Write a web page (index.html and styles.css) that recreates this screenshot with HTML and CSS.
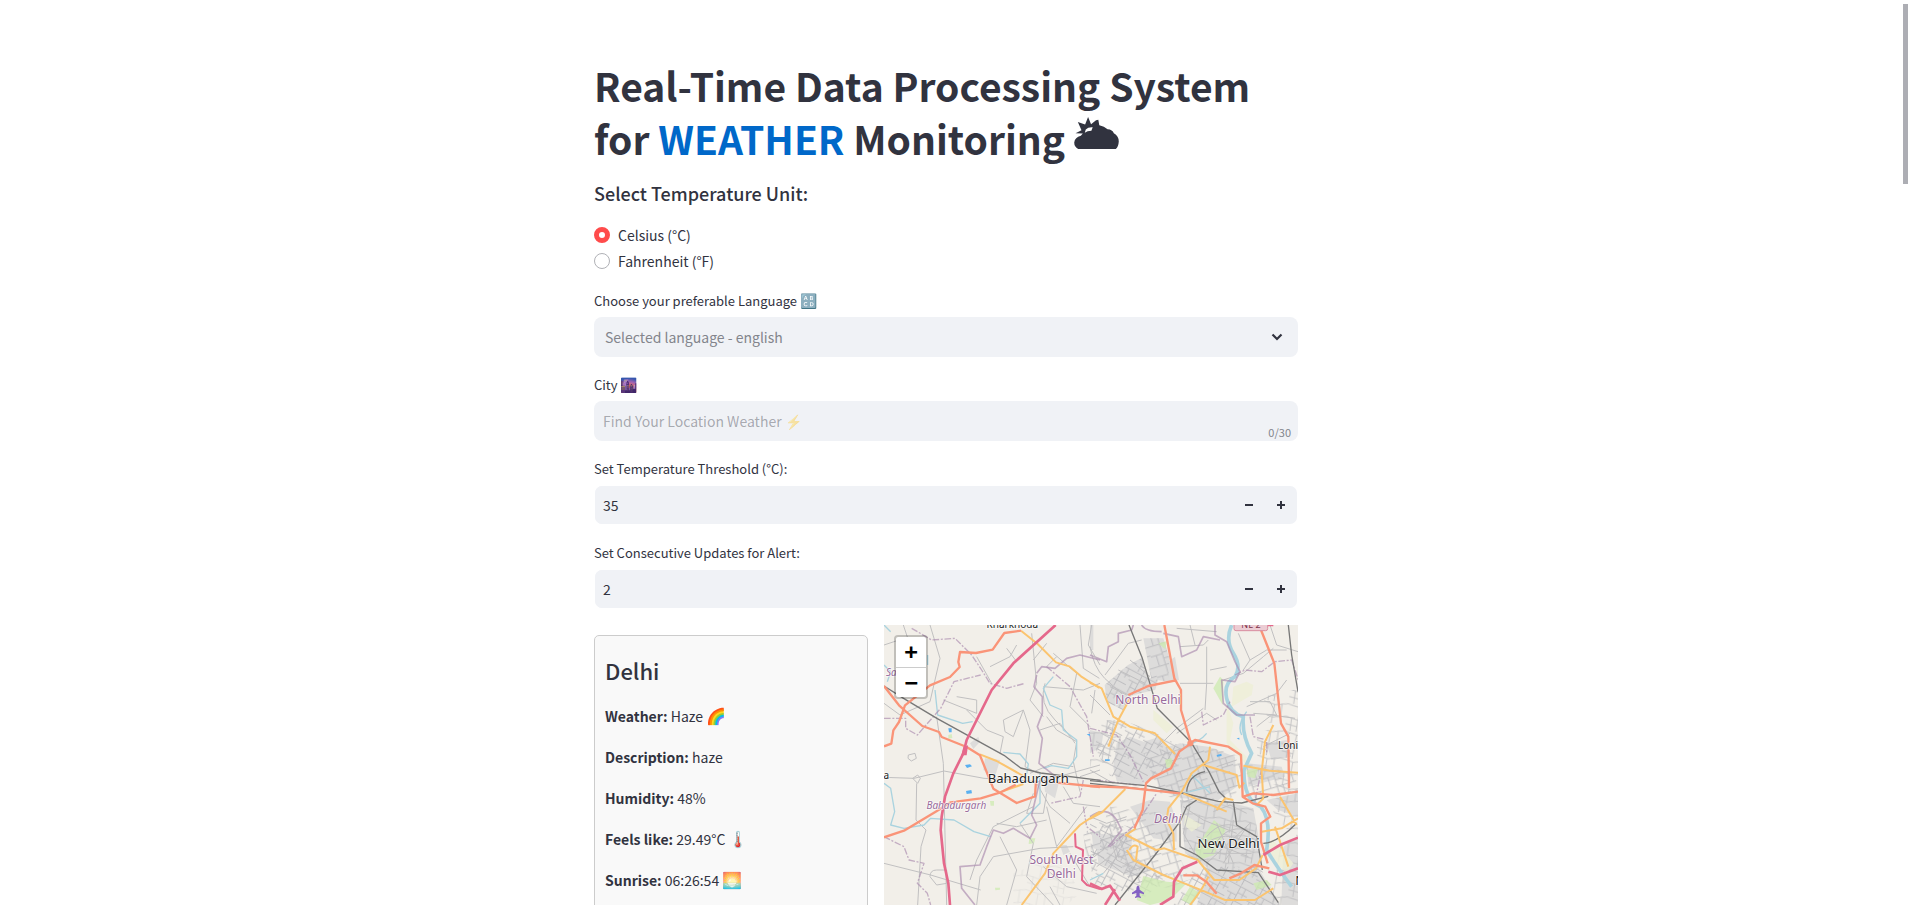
FILE: index.html
```html
<!DOCTYPE html>
<html lang="en">
<head>
<meta charset="utf-8">
<meta name="viewport" content="width=device-width, initial-scale=1">
<title>Weather Monitoring</title>
<link rel="stylesheet" href="styles.css">
</head>
<body>
<div class="app">
<main class="content">
  <h1 class="title">Real-Time Data Processing System for <span class="accent">WEATHER</span> Monitoring <svg class="title-icon" viewBox="0 0 135 100" role="img" aria-label="Cloudy"><path fill="currentColor" fill-rule="evenodd" d="M12 97Q0 90 0 77 2 62 20 57L26 50 4 49 22 40 11 15 33 23 42 0 51 22 66 10 73 8 76 25Q91 28 101 37 116 38 120 49 135 57 135 74 134 90 126 97ZM32 48Q39 42 52 42L56 31Q42 30 35 38Z"/></svg></h1>

  <fieldset class="units">
    <legend class="units-title">Select Temperature Unit:</legend>
    <label class="radio-row"><input class="radio" type="radio" name="unit" checked><span>Celsius (°C)</span></label>
    <label class="radio-row"><input class="radio" type="radio" name="unit"><span>Fahrenheit (°F)</span></label>
  </fieldset>

  <div class="field">
    <label class="label" for="language">Choose your preferable Language <span class="emoji">🔠</span></label>
    <div class="select-box">
      <select class="control select" id="language"><option>Selected language - english</option></select>
      <svg class="chevron" viewBox="0 0 12 12" aria-hidden="true"><path fill="none" stroke="currentColor" stroke-width="2.200" d="M1.500 3.500 6 8l4.500-4.500"/></svg>
    </div>
  </div>

  <div class="field">
    <label class="label" for="city">City <span class="emoji">🌆</span></label>
    <div class="text-box">
      <input class="control text" id="city" type="text" maxlength="30" placeholder="Find Your Location Weather ⚡">
      <span class="counter">0/30</span>
    </div>
  </div>

  <div class="field">
    <label class="label" for="threshold">Set Temperature Threshold (°C):</label>
    <div class="number-box">
      <input class="control number" id="threshold" type="text" inputmode="numeric" value="35">
      <button class="step" type="button" aria-label="Decrease threshold"><svg class="step-icon" viewBox="0 0 8 8"><path fill="currentColor" d="M0 3h8v2H0z"/></svg></button>
      <button class="step" type="button" aria-label="Increase threshold"><svg class="step-icon" viewBox="0 0 8 8"><path fill="currentColor" d="M0 3h3V0h2v3h3v2H5v3H3V5H0z"/></svg></button>
    </div>
  </div>

  <div class="field">
    <label class="label" for="updates">Set Consecutive Updates for Alert:</label>
    <div class="number-box">
      <input class="control number" id="updates" type="text" inputmode="numeric" value="2">
      <button class="step" type="button" aria-label="Decrease updates"><svg class="step-icon" viewBox="0 0 8 8"><path fill="currentColor" d="M0 3h8v2H0z"/></svg></button>
      <button class="step" type="button" aria-label="Increase updates"><svg class="step-icon" viewBox="0 0 8 8"><path fill="currentColor" d="M0 3h3V0h2v3h3v2H5v3H3V5H0z"/></svg></button>
    </div>
  </div>

  <div class="columns">
    <section class="card">
      <h3 class="card-title">Delhi</h3>
      <p class="fact"><b>Weather:</b> Haze <span class="emoji-lg">🌈</span></p>
      <p class="fact"><b>Description:</b> haze</p>
      <p class="fact"><b>Humidity:</b> 48%</p>
      <p class="fact"><b>Feels like:</b> 29.49°C <span class="emoji-lg">🌡️</span></p>
      <p class="fact"><b>Sunrise:</b> 06:26:54 <span class="emoji-lg">🌅</span></p>
    </section>

    <section class="map" aria-label="Map of Delhi">
      <svg class="map-canvas" viewBox="0 0 1242 840" role="img" aria-label="Street map">
        <defs>
          <pattern id="streets-a" width="62" height="70" patternUnits="userSpaceOnUse" patternTransform="rotate(28)"><path d="M0 4h62M0 33h32M31 4v66M12 51h50M14 33v37M48 4v30M31 24h31" stroke="#b9b9bc" stroke-width="2.500" fill="none"/></pattern>
          <pattern id="streets-b" width="71" height="64" patternUnits="userSpaceOnUse" patternTransform="rotate(-17)"><path d="M0 2h71M0 32h36M36 2v62M17 32v32M54 2v26M36 28h35M36 46h20" stroke="#b7b7bb" stroke-width="2.500" fill="none"/></pattern>
          <pattern id="streets-c" width="78" height="82" patternUnits="userSpaceOnUse" patternTransform="rotate(8)"><path d="M0 2l40 8 38-8M0 40l37 8 41-8M38 10l-4 72M60 5v40M16 42v40M0 62l35 5" stroke="#bcbcbf" stroke-width="2.500" fill="none"/></pattern>
        </defs>
        <rect class="land" width="1242" height="840"/>

        <g transform="translate(618 -15)">
          <g class="urban">
            <path d="M44 195l70-60 42-22 22 60 26 6-8 30-74 18-22 44-50-25zM160 55l60 0 18 60-4 70-50-8zM215 140l40-30 12 70-30 8z"/>
            <path d="M80 370l40-20 40 15 50-15 50 60-25 50-85 35-70-12-10-40zM180 400l90-30 85 10 80 30 5 90-55 40-110-5-65-25zM0 330l40 10-6 40-34 20zM120 560l60-20 60 5 20 60 0 60-70-10z"/>
            <path d="M270 540l140 5 80 20 20 110-5 75-140 0-80-50zM350 740l160 12 60 103-250 0 20-60zM470 430l105 10 10 30-110 30zM530 540l94-20v70l-60-20zM580 680l44-30v205h-50z"/>
            <path d="M15 640l110 10 0 50 60 50-60 20-100-40zM530 370l60-10 14 50-60 10zM0 0h10v90h-10z"/>
          </g>
          <g>
            <path fill="url(#streets-a)" d="M44 195l70-60 42-22 22 60 26 6-8 30-74 18-22 44-50-25zM60 290l110 35 50 25 60 35-25 60-85 35-110-12-50-90zM0 600l125 20 0 90 100 70-60 50-160-40zM310 740h200l60 115-320 0 50-80z"/>
            <path fill="url(#streets-b)" d="M160 400l110-30 85 10 100 30 5 90-55 50-130-5-65-25zM160 55l60 0 18 60-4 70-50-8zM465 430l150 30 10 60-140 20zM60 560l30 0 60 20 60-5 40 90 30 70 50 30-90 40-120-20-40-80-70-20z"/>
            <path fill="url(#streets-c)" d="M270 540l140 5 80 20 20 110-5 75-140 0-80-50zM500 340l124-40v230l-120-60zM530 540l94-20v140l-60-60zM570 680l54-30v205h-80zM0 300l80 0 30 120-110 20zM520 230l104-24v120l-90-20z"/>
          </g>
          <g class="park">
            <path d="M370 205l20-35 10 10-2 75zM372 600l35 30-35 75-45 15-12-30zM160 768l70 17 60 5-50 50-60 15-40-15zM300 800l30 20-25 35-30-15zM470 450l35-5-10 30-22-5zM205 70l25-6-4 24zM490 790l40-10 15 15-45 15zM225 420l20-6 5 24-20 6z"/>
            <path class="field-green" d="M430 200l40-15 20 10-5 30-60 35zM410 250l20 60-10 50 50 50-5 20-55-60zM285 585l50 30-30 20-22-20zM190 270l60 50-20 20-40-40zM520 670l30-10 60 70-20 30-50-50z"/>
          </g>
          <g class="minor">
            <path d="M0 80Q10 140 44 175L100 225M45 165l70-95 40-10M85 150l80 40M120 120l60 50M60 200l50 25M270 80l70-5 15-15M350 80v110l-5 80M270 190l100 0M340 265l-80 60-60 60M380 300l-30-20-90 60M0 225l60 60M400 180l60-20 60-50 30-25M460 150l20-30-35-80M470 260l90-40 30-40M480 245l60 0 20 40-70-5M500 320l45-35 70 10M480 120l50-30 60 0M300 15l15 60M260 25l120 10M540 15l20 60 64 20M380 440l60-20M600 340l-80 40M470 580l-50-25-50 20M0 590l50 20 60-20M0 450l70 40M15 210l-10 70M360 150l50-10"/>
            <path d="M350 650q50-60 110-20M335 680q70-60 145-5M365 700q30-90 110-70M380 610l50 120M430 600l-15 130M470 620l-70 110M320 650l155 60M350 730l130-120M340 700h145M280 560l60 40 100 40M300 560l-20 80 40 70M20 700l80 60 60-20M0 720l90-70M40 760l50-60M60 640l20 80 60 30M20 740q60-40 80-90"/>
          </g>
          <path class="river-wide" d="M425 15Q405 60 430 100T435 170Q400 190 410 235T460 290Q455 345 485 400L462 450Q460 540 512 560 545 600 530 690 560 740 605 800"/>
          <path class="water" d="M350 340q-20 25-60 35M300 460l60 60M280 520l80-20M0 780l40-20M470 275q-30 40-15 70"/>
          <path class="boundary" d="M0 105l50 20 5-45 30-15 0-25 40-10 5-15M155 15q10 20 60 20M220 40l45 10 10 60 45-20 20-40 50 10M375 15l0 30 35 20 25 60 15 30-15 30-40-5 5 70 40 35 55 0M0 590q50-35 80 10l15 30-40 50"/>
          <path class="boundary dashed" d="M435 165l30-15 50 5 40-30 50-5 20 60M335 275l5 40 60-30 20-40M480 290l10 60 40 10 0 40M0 325l80 20 40 60 40 80M20 480l120 15M60 680l80-70 60-90M515 445l-20 100"/>
          <path class="rail" d="M117 15l40 100 45 150 100 100 55 90 30 60 20 20M0 482l170 15 120 25 95 22 70 5 80-20M0 490l280 30M75 855l120-150 75-100 20-45 30-20M290 515q5-50 55-60M595 15l10 90 19 110M430 545l10 70 60 35 17 100M270 600v80l50 25 60 45 125 8 60 90M520 670q40 0 100-60"/>
          <path class="tertiary" d="M0 188l35 17 35 85 50 30 75 20 60 62M120 235l-35 65-30 80M340 435l100 30 8 38 15-15M360 380l-5 40-50 40-30 55-40 50-5 35 20 40 2 50M106 507l-70 70-36 20M280 520l130 55M138 625l-30 20 60 30 30 15 25-5 100 35 50 60 75 0 50-35 20-40M110 690l20 30 90 45 50 20 75 30 60 25 90 0 55-35M118 690q10-20 25-10l-5 40M460 437l80 15 84 6M550 315l-25 50-10 90 5 80-20 20M515 635l60-10 49-30M570 530l50 85M555 620l40 120M300 855q40-50 55-85M380 570l25-35 25 5"/>
          <path class="primary" d="M223 15l30 160 20 35 0 60 30 100-35 25-25 50-60 30-15 15-10 80-25 55M115 225l60-27 83-17M300 370l15-10 100 20 38 25 5 125 30 20 38 10 15 30-28 20 0 55 20 65M0 498l110 5 160 17M513 30l40 100 20 180 22 40 2 155M460 530l30-10 60 5 74-10M418 775l35-15 40-25 45 10M280 766h40l30 20 30 35"/>
          <path class="motorway" d="M0 790l35 17 25-10 30 45M75 808l-30 47M210 855l40-25 2-45 25-40 45-20M520 705l50-30 54-22M535 755l35 10 54-20M500 15h50"/>
          <circle class="junction" cx="301" cy="370" r="9"/>
          <path class="pond" d="M380 405l14-4 1 7-14 2zM45 418h14v5h-14zM335 320l15 2M440 355l8-2v6z"/>
          <path class="plane" d="M144 797q5 0 5 12l13 9v5l-13-4v8l4 4v3l-9-2-9 2v-3l4-4v-8l-13 4v-5l13-9q0-12 5-12z"/>
          <rect class="road-badge" x="432" y="-8" width="101" height="40" rx="6"/>
          <g class="halo">
            <text class="road-name" x="483" y="23" text-anchor="middle">NE 2</text>
            <text class="district" x="174" y="252" text-anchor="middle">North Delhi</text>
            <text class="district oblique" x="233" y="609" text-anchor="middle">Delhi</text>
            <text class="town" x="416" y="684" text-anchor="middle">New Delhi</text>
            <text class="place" x="564" y="388">Loni</text>
            <text class="town" x="616" y="794">N</text>
          </g>
        </g>

        <g transform="translate(-12 -15)">
          <g class="urban">
            <path d="M315 415l45 5-15 50-35-20zM270 370l25-20 5 15-20 22zM490 465l50 10-15 60-30-20zM540 675l20 0 10 20-20 10zM635 640l25-10v60l-20-5z"/>
            <path fill="url(#streets-b)" d="M610 640l50-30v120h-40z"/>
            <path fill="url(#streets-c)" d="M400 760l100-40 60 20 40 80-40 35h-160z" opacity=".3"/>
          </g>
          <g class="park"><path d="M330 543l12 0 0 14-10 0zM448 655l18 0-4 15-16 2zM345 803l15 0 0 6-14 2zM205 345l10-3 2 12-12 2z"/></g>
          <g class="minor">
            <path d="M150 15l30 100-30 130-90 40-48-35M70 15l20 60M12 75l60-20 50 20M170 290l20 140 10 425M12 472l90 3 90-22 120 22 170 10 178-50M85 405l20-5 4 15-15 8-10-8zM98 475l15 15 8-15-8-10zM110 490l-2 110 30 30-15 50-10 175M12 730l140 35 150 45M150 770q0-20 20-20l30 0 0 40-30 5zM230 230l60 10 0 40-100-40M290 110l45 80M330 140l60-30 20-35M410 125l-30-40M460 120l40-50M600 15l10 130 48 30M635 15l-10 60 35 60M370 300l60-30-30 80-25-15zM430 270l20 60-15 110 40 20M455 40l15 150-20 50 40 50M500 290l30 40 60 35-10 60 20 90M480 330l60-20 30 40M470 490l40 70 60 50M460 560l-120 60-50 100-20 60M420 610l40 60-20 100 80 85M340 710l140-25 100-5M340 710l-40 60-10 85M360 650l50 100-30 105M500 560l30 120M500 600l-90 20-60-10M580 440l-60-10-70 30M600 470l60-20M550 500l30 50 80 10M530 680l90-120M490 740l70 60 90 20M510 800l30 55M570 700l60 100M260 270l60 60 50 20-10 50M490 200l120 10 50-20M520 100l70 60-20 100 60 60"/>
            <path d="M495 190q-20 60 30 110t60 70M500 140l30-30M460 520l-20 60 50 0 10-60"/>
          </g>
          <path class="water" d="M12 135l20 20-10 30M143 105l0 30M165 210l8 75 75 25 30-5M370 397l50 5 25 30-5 30M490 445l25-8 50 8 25-35 0-50-40-30-5-60-35-15-20-50 30-35M12 490l20 15 12 70-12 40 40 10 60-10 20-20 70 5 60 35 50 15M420 610l60-60 0-90M12 15l20 20"/>
          <path class="boundary" d="M470 160l15-20 40 5 35-30 40-10 60 15M470 165l-8 35 25 30 0 50-15 40 15 35-10 75 50 40M480 480l-25 105 15 30-20 40-50-30-30 15-30-10-20 50-20 55-60 5 5 65 40 50"/>
          <path class="boundary dashed" d="M95 25l60 35 70-5 50 50 30 45 25 40 50 15 55-15M12 295l65 0 0 30 35 20 70-80 40-80 80-20M12 650l60 30 15 40 45 10-20 60 30 30 10 35M500 140l70 60 50 90 20 120M610 560l10 60 40 30M610 480l-10 50-90 20"/>
          <path class="rail" d="M12 198l60 38 100 60 200 110 50 38 60 15 180 22"/>
          <path class="tertiary" d="M423 32l50 40 55 55 40 12 35 30 55 35M300 403l50 20 80 45M360 517l70-25M660 575l-60 40-80 85-25 60-70 95"/>
          <path class="primary" d="M423 32l-50 7-35 50-50 10-48-3-5 30 4 15-29 30-60 25-75 60-18 50-17 25-6 40-22 8M12 198l45 58 70 62 50 18 8 15 75 30 40 25 40 100 70 43 55-20 3-47M12 652l60-20 100-60 40-25 90-12 60-18 45-23M530 488l130 13"/>
          <path class="motorway" d="M527 15L400 130l-65 80-30 60-45 90-10 40-30 60-25 70-10 60-3 40 10 100 13 60 5 65"/>
          <path class="motorway thin" d="M585 640l2 40 22 10-3 90 15 15 39 12"/>
          <path class="interchange" d="M250 382l14-6-4 30-16 0z"/>
          <path class="pond" d="M255 435l15-2 6 6-15 5zM258 513l16-3 2 10-16 2zM205 325l10 0 0 12-8 0zM620 343l10-2v8z"/>
          <g class="halo">
            <text class="place" x="397" y="25" text-anchor="middle">Kharkhoda</text>
            <text class="place purple oblique" x="18" y="168">Sa</text>
            <text class="place" x="-8" y="476">na</text>
            <text class="town" x="445" y="488" text-anchor="middle">Bahadurgarh</text>
            <text class="place purple oblique" x="229" y="566" text-anchor="middle">Bahadurgarh</text>
            <text class="district" x="544" y="731" text-anchor="middle">South West</text>
            <text class="district" x="544" y="775" text-anchor="middle">Delhi</text>
          </g>
        </g>
      </svg>
      <div class="zoom">
        <button class="zoom-button" type="button" aria-label="Zoom in">+</button>
        <button class="zoom-button" type="button" aria-label="Zoom out">−</button>
      </div>
    </section>
  </div>
</main>
<div class="scroll-rail"><div class="scroll-thumb"></div></div>
</div>
</body>
</html>
```
FILE: styles.css
```css
* { box-sizing: border-box; }

body {
  margin: 0;
  background: #fff;
  color: #31333f;
  font: 14px/24px "Noto Sans CJK SC", "Noto Sans", sans-serif;
}

.app {
  display: flex;
  height: 100vh;
  overflow: hidden;
}

.content {
  flex: 1;
  max-width: 736px;
  margin: 0 auto;
  padding: 59px 16px 0;
}

.title {
  margin: 0;
  font-size: 39px;
  line-height: 53px;
  font-weight: 700;
}
.accent { color: #0068c9; }
.title-icon { width: 45px; height: 33px; margin-bottom: 5px; vertical-align: baseline; }

.units {
  margin: 16px 0;
  padding: 0;
  border: 0;
}
.units-title {
  padding: 0 0 18px;
  font-size: 18px;
  line-height: 24px;
  font-weight: 500;
}
.radio-row {
  display: flex;
  align-items: center;
  gap: 8px;
}
.radio-row + .radio-row { margin-top: 2px; }
.radio {
  appearance: none;
  width: 16px;
  height: 16px;
  margin: 0;
  border: 1px solid #b0b1b6;
  border-radius: 50%;
  background: #fff;
}
.radio:checked { border: 5px solid #ff4b4b; }

.field { margin-bottom: 16px; }
.label {
  display: block;
  height: 24px;
  margin-bottom: 4px;
  font-size: 13px;
}
.emoji { font: 14px/1 "Noto Color Emoji", sans-serif; }
.emoji-lg { font: 16px/1 "Noto Color Emoji", sans-serif; }

.control {
  display: block;
  width: 100%;
  height: 40px;
  padding: 0 9px;
  border: 0;
  border-radius: 8px;
  outline: 0;
  background: #f0f2f6;
  color: #31333f;
  font: inherit;
}
.select-box, .text-box { position: relative; }
.select { appearance: none; padding: 0 11px; color: #83858c; }
.chevron {
  position: absolute;
  top: 14px;
  right: 15px;
  width: 12px;
  height: 12px;
}
.text::placeholder { color: rgba(49, 51, 63, .4); opacity: 1; }
.counter {
  position: absolute;
  right: 7px;
  bottom: 0;
  color: #83858c;
  font-size: 11px;
  line-height: 18px;
}

.number-box {
  display: flex;
  height: 40px;
  border: 1px solid transparent;
  border-radius: 8px;
  background: #f0f2f6 padding-box;
}
.number { flex: 1; width: auto; height: 38px; padding: 0 8px; }
.step {
  display: grid;
  place-items: center;
  width: 32px;
  padding: 0;
  border: 0;
  background: none;
  color: #31333f;
}
.step-icon { width: 8px; height: 8px; }

.columns {
  display: grid;
  grid-template-columns: 274fr 414fr;
  gap: 16px;
}
.card {
  margin-top: 10px;
  padding: 19px 10px 24px;
  border: 1px solid #ccc;
  border-radius: 5px;
  background: #f9f9f9;
}
.card-title {
  margin: 0 0 19px;
  font-size: 22px;
  line-height: 30px;
  font-weight: 500;
}
.fact { margin: 0 0 17px; }
.fact b { font-weight: 600; }

.map { position: relative; }
.map-canvas { display: block; width: 100%; height: auto; }
.land { fill: #f2efe9; }
.urban { fill: #dddcdb; }
.park { fill: #cdebb0; opacity: .75; }
.field-green { fill: #eef0d5; }
.minor, .rail, .water, .river-wide, .boundary, .primary, .tertiary, .motorway { fill: none; stroke-linejoin: round; }
.minor { stroke: #c1c0c1; stroke-width: 3; }
.rail { stroke: #777; stroke-width: 4; }
.water { stroke: #aad3df; stroke-width: 4; }
.river-wide { stroke: #aad3df; stroke-width: 11; }
.boundary { stroke: #a989ad; stroke-width: 5; opacity: .65; }
.dashed { stroke-width: 4; stroke-dasharray: 20 5 6 5; }
.tertiary { stroke: #fbc46f; stroke-width: 6; }
.primary { stroke: #fa9478; stroke-width: 7; }
.motorway { stroke: #e5688b; stroke-width: 8; }
.thin { stroke-width: 6; }
.interchange { fill: #e5688b; }
.junction { fill: #fa9478; }
.pond { fill: #5ab0f0; }
.plane { fill: #8461c4; }
.road-badge { fill: #ecccd3; stroke: #d98ea1; stroke-width: 3; }
.halo { font-family: "Noto Sans", sans-serif; paint-order: stroke; stroke: rgba(255, 255, 255, .7); stroke-width: 5; stroke-linejoin: round; }
.town { font-size: 39px; fill: #222; }
.place { font-size: 30px; fill: #222; }
.district { font-size: 36px; fill: #996b9c; }
.road-name { font-size: 27px; fill: #80334b; stroke: none; }
.purple { fill: #996b9c; }
.oblique { font-style: italic; }

.zoom {
  position: absolute;
  top: 10px;
  left: 10px;
  border: 2px solid rgba(0, 0, 0, .2);
  border-radius: 4px;
  background: #fff padding-box;
}
.zoom-button {
  display: block;
  width: 30px;
  height: 30px;
  padding: 0;
  border: 0;
  background: none;
  color: #000;
  font: bold 22px/30px "DejaVu Sans Mono", monospace;
}
.zoom-button + .zoom-button { border-top: 1px solid #ccc; }

.scroll-rail {
  width: 16px;
  padding-top: 4px;
}
.scroll-thumb {
  width: 5px;
  height: 180px;
  margin-left: auto;
  background: #adaeb4;
}
```
